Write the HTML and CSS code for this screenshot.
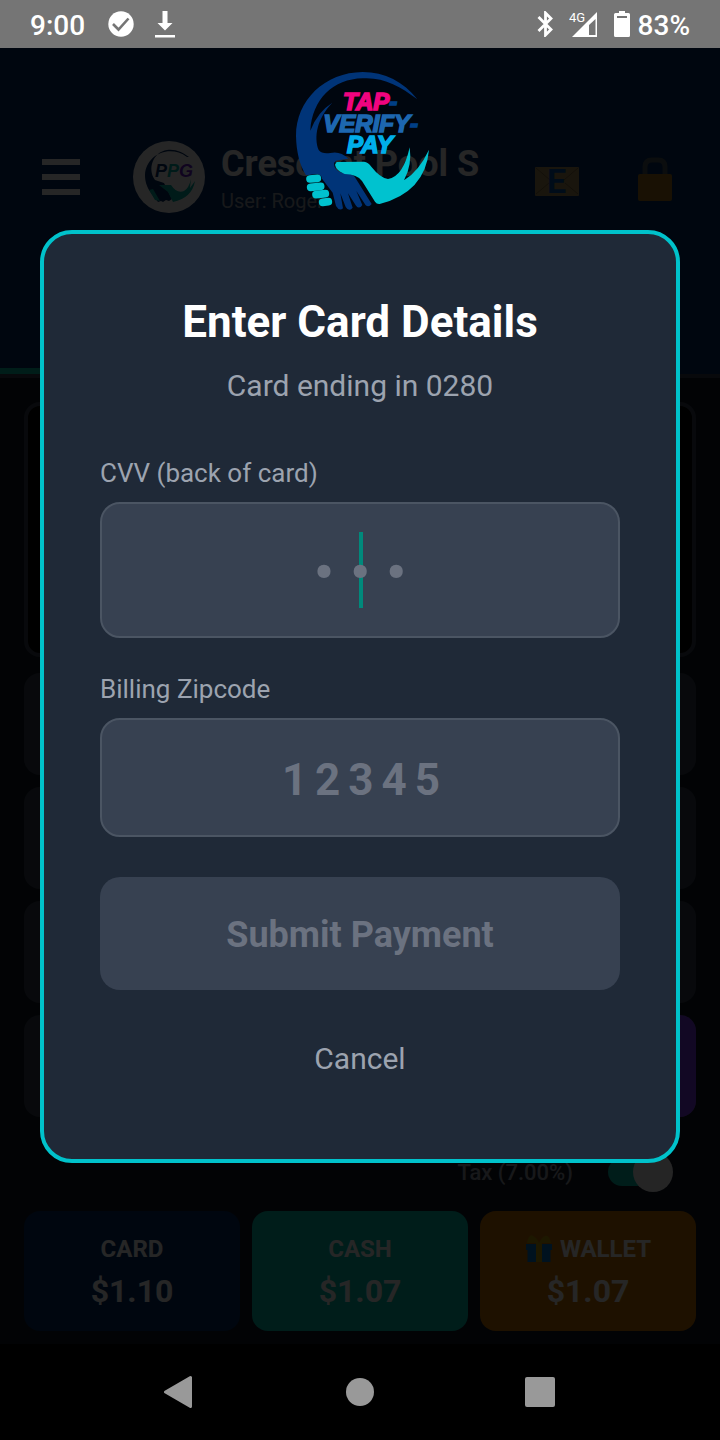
FILE: index.html
```html
<!DOCTYPE html>
<html lang="en">
<head>
    <meta charset="UTF-8">
    <meta name="viewport" content="width=device-width, initial-scale=1.0">
    <title>Enter Card Details</title>
    <link rel="stylesheet" href="styles.css">
</head>
<body>
    <div class="status-bar">
        <span class="clock">9:00</span>
        <svg class="status-check" width="26" height="26" viewBox="0 0 26 26">
            <circle cx="13" cy="13" r="12.7" fill="#fff"/>
            <path d="M5 13l5.500 5.500L20.500 7.500" fill="none" stroke="#757575" stroke-width="2.6"/>
        </svg>
        <svg class="status-download" width="20" height="28" viewBox="0 0 20 28">
            <path d="M7.5 1h5v12h5L10 20.5 2.5 13h5zM0 25h20v2.5H0z" fill="#fff"/>
        </svg>
        <div class="status-right">
            <svg width="16" height="26" viewBox="0 0 16 26">
                <path d="M1.500 6L14 18.500 8.500 24V2L14 7.500 1.500 20" fill="none" stroke="#fff" stroke-width="2.8"/>
            </svg>
            <svg class="status-signal" width="29" height="28" viewBox="0 0 29 28">
                <text x="0" y="12" class="signal-text">4G</text>
                <path d="M28 2v25H3z M26.500 9L20 15v10h6.500z" fill="#fff" fill-rule="evenodd"/>
            </svg>
            <svg class="status-battery" width="16" height="26" viewBox="0 0 16 26">
                <path d="M5 0h6v2h3.500q1.500 0 1.500 1.500v21q0 1.500-1.500 1.500h-13Q0 26 0 24.500v-21Q0 2 1.500 2H5z" fill="#fff"/>
                <path d="M3 5h10v2H3z" fill="#757575"/>
            </svg>
            <span class="battery-level">83%</span>
        </div>
    </div>

    <div class="app">
        <header class="header">
            <div class="header-row">
                <div class="menu"><span></span><span></span><span></span></div>
                <svg class="avatar" width="72" height="72" viewBox="0 0 72 72">
                    <circle cx="36" cy="36" r="36" fill="#fff"/>
                    <path d="M54 16C36 3 13 14 12 34c0 7 2 11 4 15l9 12 3-1 2 1 3-2 3 1 3-2-8-16-9-3c-8-11-2-28 12-30 9-1 15 2 22 7z" fill="#002a63"/>
                    <path d="M26 44h12q6 9 13 6 5-3 7-12l-1 9 5-7q-3 17-22 21l-5-10z" fill="#00b5a6"/>
                    <path d="M16 49l4-1 7 12-5-1z" fill="#00b5a6"/>
                    <text x="22" y="36" class="avatar-text"><tspan fill="#002a63">P</tspan><tspan fill="#00b5a6">P</tspan><tspan fill="#6a1bd1">G</tspan></text>
                </svg>
                <div class="shop">
                    <div class="shop-name">Crescent Pool S</div>
                    <div class="shop-user">User: Roger</div>
                </div>
                <svg class="mail" width="44" height="44" viewBox="0 0 44 44">
                    <rect y="10" width="44" height="29" rx="1" fill="#a8905a"/>
                    <path d="M1 11l14 12M43 11L29 23M1 37l13-11M43 37L30 26" stroke="#7b653c" fill="none"/>
                    <text x="12" y="36" class="mail-text">E</text>
                </svg>
                <svg class="lock" width="34" height="44" viewBox="0 0 34 44">
                    <path d="M7 20V10q0-7 7-7h6q7 0 7 7v10" fill="none" stroke="#4d5660" stroke-width="5"/>
                    <rect y="17" width="34" height="27" rx="2" fill="#a8761c"/>
                </svg>
            </div>
            <nav class="tabs"><div class="tab tab-active"></div><div class="tab"></div></nav>
        </header>
        <main class="content">
            <div class="amount-box"></div>
            <div class="key-row"></div>
            <div class="key-row"></div>
            <div class="key-row"></div>
            <div class="key-row split"><div></div><div class="purple"></div></div>
            <div class="tax-row">
                <label for="tax">Tax (7.00%)</label>
                <input type="checkbox" id="tax" class="toggle" checked>
            </div>
            <div class="pay-row">
                <button class="pay card">CARD<b>$1.10</b></button>
                <button class="pay cash">CASH<b>$1.07</b></button>
                <button class="pay wallet">
                    <span class="wallet-label">
                        <svg width="28" height="28" viewBox="0 0 28 28">
                            <path d="M1 9h26v6h-1.500v12h-23V15H1z" fill="#0078d0"/>
                            <path d="M11 8h6v19h-6zM2 8q2-10 6-7 4 2 6 7 3-6 6-7 4-2 6 7z" fill="#c0a000"/>
                        </svg>
                        WALLET
                    </span>
                    <b>$1.07</b>
                </button>
            </div>
        </main>

        <div class="overlay">
            <svg class="logo" width="160" height="160" viewBox="0 0 480 480">
                <path d="M412 118C370 65 315 36 248 36C135 37 48 120 48 228C49 275 59 315 78 346L108 342Q124 342 126 356L158 398L168 438Q178 455 189 445L181 400L197 441Q207 457 218 443L204 400L228 437Q238 449 247 435L229 393L257 436Q267 443 275 432L224 350Q212 338 185 338Q163 332 162 312Q163 303 174 301L205 296Q181 272 151 279Q126 283 116 270C101 230 111 176 157 128Q112 156 91 212C97 117 160 57 248 55C310 51 360 78 412 118z" fill="#003478"/>
                <path d="M170 306L252 305Q265 306 274 320Q300 353 324 357Q370 350 389 262Q397 315 372 361Q417 333 447 269Q436 396 299 432Q290 433 285 425L246 363Q232 343 194 342Q169 332 165 314z" fill="#00c2cf"/>
                <g stroke="#00c2cf" stroke-width="23" stroke-linecap="round">
                    <path d="M90 357l22-2"/>
                    <path d="M92 382l30-3"/>
                    <path d="M108 404l28-3"/>
                    <path d="M128 427l17-2"/>
                </g>
                <g class="logo-text">
                    <text x="189" y="151" fill="#f0047f" stroke="#f0047f">TAP<tspan fill="#003f86" stroke="#003f86">-</tspan></text>
                    <text x="130" y="216" fill="#1d67b0" stroke="#1d67b0">VERIFY<tspan fill="#003f86" stroke="#003f86">-</tspan></text>
                    <text x="201" y="280" fill="#00aeea" stroke="#00aeea">PAY</text>
                </g>
            </svg>
            <form class="modal">
                <h1>Enter Card Details</h1>
                <p class="subtitle">Card ending in 0280</p>
                <label class="field-label" for="cvv">CVV (back of card)</label>
                <div class="field cvv">
                    <span class="caret"></span>
                    <input type="text" id="cvv" placeholder="•••" maxlength="3">
                </div>
                <label class="field-label" for="zip">Billing Zipcode</label>
                <div class="field zip">
                    <input type="text" id="zip" placeholder="12345" maxlength="5">
                </div>
                <button type="submit" class="submit" disabled>Submit Payment</button>
                <button type="button" class="cancel">Cancel</button>
            </form>
        </div>
    </div>

    <div class="nav-bar">
        <svg width="32" height="34" viewBox="0 0 32 34"><path d="M26.500 2.500v29L1.500 17z" fill="#999" stroke="#999" stroke-width="3" stroke-linejoin="round"/></svg>
        <svg width="32" height="34" viewBox="0 0 32 34"><circle cx="16" cy="17" r="14" fill="#999"/></svg>
        <svg width="32" height="34" viewBox="0 0 32 34"><rect x="1" y="2" width="30" height="30" rx="2" fill="#999"/></svg>
    </div>
</body>
</html>
```
FILE: styles.css
```css
* {
    box-sizing: border-box;
}
body {
    margin: 0;
    min-height: 100vh;
    display: flex;
    flex-direction: column;
    background-color: #000;
    color: white;
    font-family: Roboto, sans-serif;
}
svg {
    display: block;
    flex-shrink: 0;
}
button, input {
    font-family: inherit;
    margin: 0;
}

/* status bar */
.status-bar {
    height: 48px;
    padding: 0 30px;
    display: flex;
    align-items: center;
    background-color: #757575;
    font-size: 28px;
    font-weight: 500;
    line-height: 44px;
}
.clock, .battery-level {
    padding-top: 4px;
}
.status-check {
    margin-left: 23px;
}
.status-download {
    margin-left: 21px;
}
.status-right {
    margin-left: auto;
    display: flex;
    align-items: center;
}
.status-signal {
    margin-left: 16px;
}
.status-battery {
    margin-left: 16px;
}
.battery-level {
    margin-left: 8px;
}
.signal-text {
    font-size: 13px;
    font-weight: 400;
    fill: white;
}

/* page behind the dialog */
.app {
    position: relative;
    flex: 1;
    background-color: #111827;
}
.header {
    background-color: #002b63;
    border-bottom: 4px solid #374151;
}
.header-row {
    height: 258px;
    padding: 0 48px 0 42px;
    display: flex;
    align-items: center;
}
.menu {
    width: 38px;
    display: flex;
    flex-direction: column;
    gap: 9px;
}
.menu span {
    height: 6px;
    background-color: white;
}
.avatar {
    margin-left: 53px;
}
.avatar-text {
    font: italic bold 18px "Liberation Sans", sans-serif;
    stroke-width: 1px;
}
.shop {
    margin-left: 16px;
    padding-top: 4px;
    white-space: nowrap;
}
.shop-name {
    font-size: 36px;
    font-weight: bold;
    line-height: 44px;
}
.shop-user {
    font-size: 20px;
    line-height: 30px;
    color: #9ca3af;
}
.mail {
    margin-left: auto;
}
.mail-text {
    font: bold 34px Roboto, sans-serif;
    fill: #0050a8;
}
.lock {
    margin-left: 59px;
}
.mail, .lock {
    margin-top: 4px;
}
.tabs {
    height: 68px;
    display: flex;
}
.tab {
    flex: 1;
}
.tab-active {
    border-bottom: 6px solid #00bfa5;
}
.content {
    padding: 24px 24px 13px;
}
.amount-box {
    height: 255px;
    margin-bottom: 16px;
    border: 4px solid #374151;
    border-radius: 16px;
    background-color: #000;
}
.key-row {
    height: 102px;
    margin-bottom: 12px;
    border-radius: 16px;
    background-color: #374151;
}
.split {
    display: flex;
    overflow: hidden;
}
.split div {
    flex: 1;
}
.purple {
    background-color: #7c3aed;
}
.tax-row {
    height: 82px;
    padding: 4px 24px 0 0;
    display: flex;
    align-items: center;
    justify-content: flex-end;
    gap: 35px;
    color: #9ca3af;
    font-size: 22px;
    font-weight: 500;
    line-height: 28px;
}
.tax-row label {
    padding-top: 2px;
}
.toggle {
    appearance: none;
    width: 64px;
    height: 28px;
    border-radius: 14px;
    background-color: #00bfad;
}
.toggle::before {
    content: "";
    display: block;
    width: 40px;
    height: 40px;
    margin: -6px 0 0 25px;
    border-radius: 50%;
    background-color: #f4f4f4;
}
.pay-row {
    display: flex;
    gap: 12px;
}
.pay {
    flex: 1;
    height: 120px;
    padding: 0;
    border: none;
    border-radius: 16px;
    display: flex;
    flex-direction: column;
    align-items: center;
    justify-content: center;
    gap: 4px;
    color: white;
    font-size: 24px;
    font-weight: bold;
    line-height: 36px;
}
.pay b {
    font-size: 32px;
    font-weight: 700;
    line-height: 40px;
}
.card { background-color: #002b63; }
.cash { background-color: #00bfad; }
.wallet { background-color: #c97400; }
.wallet-label {
    display: flex;
    align-items: center;
    gap: 7px;
}

/* dialog */
.overlay {
    position: absolute;
    inset: 0;
    padding: 12px 40px 0;
    display: flex;
    flex-direction: column;
    align-items: center;
    gap: 10px;
    background-color: rgba(0, 0, 0, 0.85);
}
.logo-text {
    font: italic bold 72px "Liberation Sans", sans-serif;
    stroke-width: 5px;
}
.modal {
    width: 100%;
    padding: 56px;
    border: 4px solid #00c2cb;
    border-radius: 32px;
    background-color: #1f2937;
    display: flex;
    flex-direction: column;
}
.modal h1 {
    margin: 0 0 14px;
    font-size: 44px;
    line-height: 64px;
    text-align: center;
}
.subtitle {
    margin: 0 0 54px;
    font-size: 30px;
    line-height: 36px;
    text-align: center;
    color: #9ca3af;
}
.field-label {
    margin-bottom: 14px;
    font-size: 26px;
    line-height: 30px;
    color: #9ca3af;
}
.field {
    position: relative;
    border: 2px solid #4b5563;
    border-radius: 20px;
    background-color: #374151;
}
.field input {
    position: relative;
    display: block;
    width: 100%;
    height: 100%;
    padding: 4px 0 0;
    border: none;
    outline: none;
    background: none;
    color: white;
    font-weight: bold;
    text-align: center;
}
.field input::placeholder {
    color: #6b7280;
    opacity: 1;
}
.cvv {
    height: 136px;
    margin-bottom: 36px;
}
.cvv input {
    padding: 6px 0 0 16px;
    font-size: 56px;
    letter-spacing: 16px;
}
.zip {
    height: 119px;
    margin-bottom: 40px;
}
.zip input {
    padding-left: 10px;
    font-size: 44px;
    letter-spacing: 8px;
}
.caret {
    position: absolute;
    top: 28px;
    left: 50%;
    width: 4px;
    height: 76px;
    margin-left: -1px;
    background-color: #00897b;
}
.submit {
    height: 113px;
    margin-bottom: 24px;
    padding-top: 4px;
    border: none;
    border-radius: 20px;
    background-color: #374151;
    color: #6b7280;
    font-size: 36px;
    font-weight: bold;
}
.cancel {
    height: 89px;
    border: none;
    background: none;
    color: #9ca3af;
    font-size: 30px;
}

/* system navigation */
.nav-bar {
    height: 96px;
    padding: 0 164px;
    display: flex;
    align-items: center;
    justify-content: space-between;
}
```
